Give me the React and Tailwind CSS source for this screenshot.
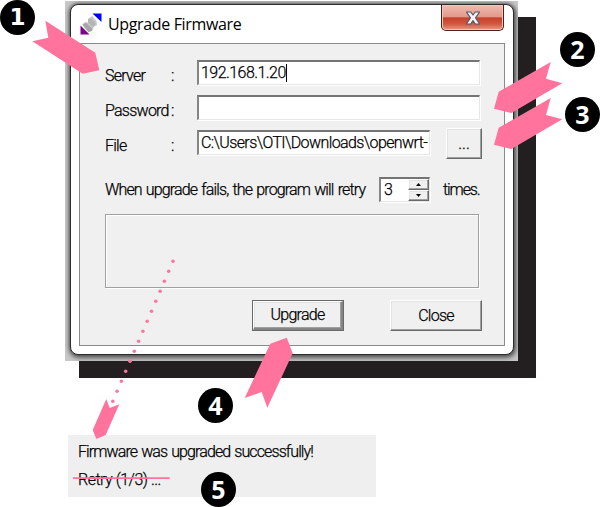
import React from "react";

const PINK = "#ff739d";

const sunken =
  "bg-white border-t-2 border-l-2 border-b border-r border-t-[#747474] border-l-[#858585] border-b-[#e6e6e6] border-r-[#e6e6e6] shadow-[1px_1px_0_#fff]";
const raised =
  "flex items-center justify-center bg-[#f0f0f0] border border-t-white border-l-white border-b-[#696969] border-r-[#696969] shadow-[inset_-1px_-1px_0_#a0a0a0,inset_1px_1px_0_#e3e3e3]";

function Badge({ n, className }) {
  return (
    <div
      className={
        "absolute flex h-[35px] w-[35px] items-center justify-center rounded-full bg-black leading-none font-bold tracking-normal text-white [-webkit-text-stroke:0] " +
        className
      }
    >
      {n}
    </div>
  );
}

function AppIcon() {
  return (
    <svg className="h-[22px] w-[22px] shrink-0" viewBox="0 0 22 22">
      <path d="M8 6 L12 3 L16.500 8 L17 12 L13.500 14 L13 17 L8.500 19 L4.500 15 L2.500 11.500 L5 9 L8 9.500 Z" fill="#c6c6c6" />
      <path d="M2.500 11.500 L6 10 L12 15.500 L12 18 L8.500 19 Z" fill="#a6a6a6" />
      <path d="M8 6 L11 5.500 L15.500 10.500 L13.500 14 L8 9.500 Z" fill="#b4b4b4" />
      <path d="M12.500 .5 H21.500 V9 Z" fill="#0000f8" />
      <path d="M.5 12.500 L9.500 21.500 H.5 Z" fill="#800090" />
    </svg>
  );
}

function CloseBox() {
  return (
    <div className="mr-[1px] flex h-[26px] w-[63px] items-center justify-center rounded-b-[5px] border border-t-0 border-[#4b211d] bg-[linear-gradient(#f0bcb1_0%,#e39a8b_46%,#c9402b_52%,#d0573f_75%,#e79a80_100%)] shadow-[inset_0_0_0_1px_#f3c5bb]">
      <svg className="h-[14px] w-[16px]" viewBox="0 0 16 14">
        <path
          d="M1.500 1 H5.700 L8 4 L10.300 1 H14.500 L10.600 6.800 L14.700 13 H10.300 L8 9.700 L5.700 13 H1.300 L5.400 6.800 Z"
          fill="#f4f4f4"
          stroke="#55586a"
          strokeWidth="1.200"
          strokeLinejoin="round"
        />
      </svg>
    </div>
  );
}

function Label({ text }) {
  return (
    <div className="flex w-[92px] shrink-0 items-start pt-[6px]">
      <span className="w-[66px] whitespace-nowrap">{text}</span>
      <span>:</span>
    </div>
  );
}

function Spinner() {
  return (
    <div className={"flex h-[25px] w-[51px] " + sunken}>
      <span className="flex-1 pl-[3px] leading-[22px]">3</span>
      <div className="flex w-[21px] flex-col">
        <div className={"flex-1 " + raised}>
          <svg className="h-[3px] w-[5px]" viewBox="0 0 5 3"><path d="M0 3 L2.500 0 L5 3 Z" /></svg>
        </div>
        <div className={"flex-1 " + raised}>
          <svg className="h-[3px] w-[5px]" viewBox="0 0 5 3"><path d="M0 0 L2.500 3 L5 0 Z" /></svg>
        </div>
      </div>
    </div>
  );
}

function Dialog() {
  return (
    <div className="h-[360px] w-[453px] overflow-hidden bg-[#c8c8c8] pt-[3px] pl-[5px]">
      <div className="flex h-[351px] w-[444px] flex-col rounded-[8px] border border-[#2c2c2c] bg-white px-[8px] shadow-[0_0_4px_0_#444,1px_2px_5px_1px_#666]">
        <div className="flex h-[38px] shrink-0 items-start">
          <div className="flex flex-1 items-center gap-[6px] pt-[8px] pl-[1px]">
            <AppIcon />
            <span className="font-['Open_Sans',sans-serif] text-[16px] leading-[22px] font-normal tracking-[-0.35px] text-black [-webkit-text-stroke:0]">
              Upgrade Firmware
            </span>
          </div>
          <CloseBox />
        </div>
        <div className="flex h-[303px] flex-col border border-[#8a8a8a] bg-[#f0f0f0] pt-[16px] pl-[25px]">
          <div className="flex h-[35px]">
            <Label text="Server" />
            <div className={"flex h-[25px] w-[283px] items-center pl-[2px] " + sunken}>
              <span className="border-r border-black leading-[18px] tracking-[-0.55px]">192.168.1.20</span>
            </div>
          </div>
          <div className="flex h-[35px]">
            <Label text="Password" />
            <div className={"h-[25px] w-[283px] " + sunken} />
          </div>
          <div className="flex h-[47px]">
            <Label text="File" />
            <div className={"flex h-[25px] w-[233px] items-center pl-[2px] whitespace-nowrap " + sunken}>
              <span className="tracking-[-0.6px]">C:\Users\OTI\Downloads\openwrt-</span>
            </div>
            <div className={"mt-[-2px] ml-[16px] h-[31px] w-[36px] tracking-normal " + raised}>...</div>
          </div>
          <div className="flex h-[25px] items-center">
            <span className="w-[274px] tracking-[-0.85px] whitespace-nowrap [word-spacing:1px]">When upgrade fails, the program will retry</span>
            <Spinner />
            <span className="ml-[13px] tracking-[-1.1px]">times.</span>
          </div>
          <div className="mt-[12px] h-[74px] w-[374px] shrink-0 border border-[#a0a0a0] shadow-[1px_1px_0_#fff,inset_1px_1px_0_#fff]" />
          <div className="mt-[12px] flex pl-[147px]">
            <div className="h-[31px] w-[92px] border border-[#696969]">
              <div className={"h-full w-full border-b-2! border-r-2! border-b-[#858585]! border-r-[#858585]! " + raised}>Upgrade</div>
            </div>
            <div className={"ml-[46px] h-[31px] w-[92px] " + raised}>Close</div>
          </div>
        </div>
      </div>
    </div>
  );
}

function Annotations() {
  const dots = Array.from({ length: 15 }, (_, i) => [173 - i * 4.3, 261.3 + i * 10]);
  return (
    <svg className="absolute top-0 left-0 h-[507px] w-[600px]" viewBox="0 0 600 507" fill={PINK}>
      <path d="M45.300 20.700 L95.300 52.700 L99.300 70.300 L82.700 73.700 L32.300 41.300 L48.300 37.700 Z" />
      <path d="M550.700 62 L546 78.700 L562.300 83.300 L511.300 113 L494 108.700 L498.700 91.700 Z" />
      <path d="M550.700 98 L546 115 L562.300 119.300 L511.300 149 L494 144.700 L498.700 127.700 Z" />
      <path d="M286.700 337.700 L292.700 353.300 L267.300 407.700 L261.700 392 L244.700 398 L270.300 343.700 Z" />
      <path d="M106.300 399 L109.700 408 L119.300 404.300 L105.700 435 L96.300 439 L92.700 430 Z" />
      {dots.map(([x, y]) => (
        <circle key={y} cx={x} cy={y} r={1.75} />
      ))}
      <path d="M73 477.200 H169.700 V479 H73 Z" />
    </svg>
  );
}

export default function App() {
  return (
    <div className="relative h-[507px] w-[600px] overflow-hidden bg-white font-[Roboto,sans-serif] text-[16px] leading-[20px] font-light tracking-[-0.75px] text-black [-webkit-text-stroke:0.25px_#000]">
      <div className="absolute top-[17px] left-[79px] h-[361px] w-[457px] bg-[#231f20]" />
      <div className="relative pt-[1px] pl-[65px]">
        <Dialog />
      </div>
      <div className="mt-[74px] ml-[68px] flex h-[62px] w-[308px] flex-col bg-[#efefef] pt-[7px] pl-[10px]">
        <span className="h-[28px] tracking-[-0.9px] [word-spacing:1px]">Firmware was upgraded successfully!</span>
        <span className="tracking-[-0.5px]">Retry (1/3) ...</span>
      </div>
      <Annotations />
      <Badge n="1" className="top-[0px] left-[0px] font-['DejaVu_Sans',sans-serif] text-[23px]" />
      <Badge n="2" className="top-[32px] left-[560px] font-['Open_Sans',sans-serif] text-[25px]" />
      <Badge n="3" className="top-[97px] left-[565px] font-['Open_Sans',sans-serif] text-[25px]" />
      <Badge n="4" className="top-[388px] left-[198px] font-['Open_Sans',sans-serif] text-[25px]" />
      <Badge n="5" className="top-[472px] left-[201px] font-['Open_Sans',sans-serif] text-[25px]" />
    </div>
  );
}
